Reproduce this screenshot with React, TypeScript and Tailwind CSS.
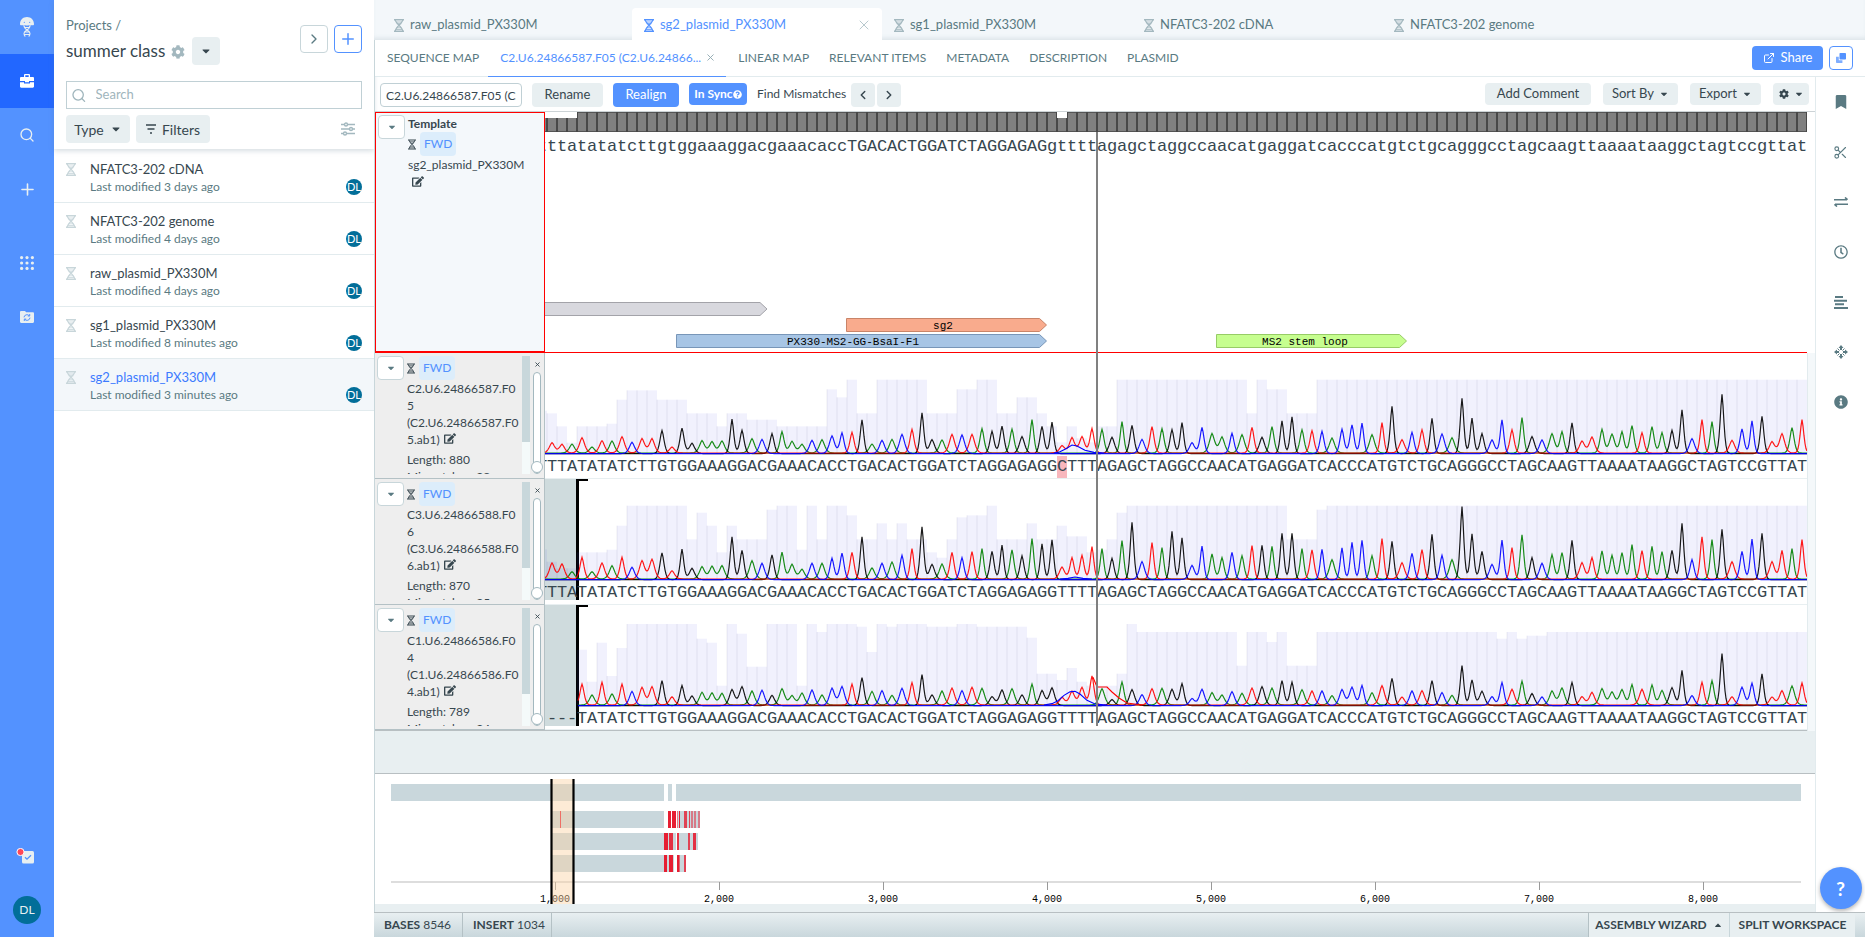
import React from "react";
import { FaBookmark, FaCog, FaInfoCircle, FaRegClock, FaEdit, FaCaretDown, FaCaretUp, FaQuestionCircle } from "react-icons/fa";
import { LuPlus, LuSearch, LuX, LuChevronRight, LuChevronLeft, LuExternalLink, LuScissors } from "react-icons/lu";

const CELL = 10;
const BASES =
  "TTATATATCTTGTGGAAAGGACGAAACACCTGACACTGGATCTAGGAGAGGTTTTAGAGCTAGGCCAACATGAGGATCACCCATGTCTGCAGGGCCTAGCAAGTTAAAATAAGGCTAGTCCGTTAT";
const TEMPLATE =
  "t" + BASES.slice(0, 30).toLowerCase() + BASES.slice(30, 50) + BASES.slice(50).toLowerCase();
const VIEW_WIDTH = (BASES.length + 1) * CELL;

type Read = {
  id: string;
  name: string[];
  length: number;
  mismatches: number;
  sequence: string;
  mismatchAt?: number;
  trimmed: boolean;
  firstBase: number;
  floor: number;
  /* peak positions below the top of the plot, three units to a pixel */
  peaks: number[];
  /* [run length, top of the quality bar] */
  quality: [number, number][];
  extra: { color: string; points: [number, number][] }[];
};

const READS: Read[] = [
  {
    id: "c2",
    name: ["C2.U6.24866587.F0", "5", "(C2.U6.24866587.F0", "5.ab1)"],
    length: 880,
    mismatches: 28,
    sequence: "T" + BASES.slice(0, 51) + "C" + BASES.slice(52),
    mismatchAt: 52,
    trimmed: false,
    firstBase: 0,
    floor: 308,
    peaks: [
      277, 282, 281, 262, 290, 271, 272, 259, 274, 265, 265, 239, 290, 232, 277, 271, 274, 272, 205, 238, 265, 265,
      248, 244, 273, 282, 268, 268, 255, 246, 246, 207, 281, 268, 267, 250, 237, 186, 266, 269, 252, 252, 252, 235,
      241, 226, 236, 257, 208, 226, 214, 286, 262, 259, 235, 237, 259, 214, 223, 265, 229, 235, 236, 215, 275, 230,
      250, 260, 247, 253, 231, 259, 229, 210, 198, 238, 241, 241, 263, 235, 222, 217, 253, 217, 166, 268, 244, 238,
      202, 249, 262, 142, 202, 248, 267, 207, 238, 202, 257, 267, 250, 244, 216, 272, 260, 237, 251, 244, 226, 247,
      229, 247, 238, 177, 263, 208, 214, 130, 270, 234, 210, 196, 274, 250, 232, 208,
    ],
    quality: [
      [1, 181], [1, 189], [1, 228], [1, 277], [3, 228], [1, 220], [1, 148], [3, 120], [3, 148], [3, 189], [1, 228],
      [2, 189], [3, 208], [5, 228], [1, 117], [1, 141], [1, 88], [2, 189], [5, 88], [3, 189], [2, 117], [2, 88],
      [2, 189], [2, 141], [1, 189], [1, 228], [1, 276], [1, 228], [1, 264], [1, 276], [2, 228], [13, 88], [1, 189],
      [1, 88], [2, 117], [3, 189], [49, 88],
    ],
    extra: [{ color: "#0000ff", points: [[1054, 308], [1060, 304], [1066, 295], [1072, 284], [1077, 287], [1085, 300], [1094, 306], [1104, 308]] }],
  },
  {
    id: "c3",
    name: ["C3.U6.24866588.F0", "6", "(C3.U6.24866588.F0", "6.ab1)"],
    length: 870,
    mismatches: 25,
    sequence: "T" + BASES,
    trimmed: true,
    firstBase: 0,
    floor: 686,
    peaks: [
      638, 641, 664, 621, 664, 638, 646, 621, 649, 631, 627, 606, 661, 595, 652, 649, 648, 646, 558, 598, 631, 637,
      612, 606, 642, 657, 637, 639, 622, 607, 606, 558, 653, 637, 635, 613, 595, 528, 640, 641, 606, 620, 604, 595,
      601, 583, 599, 615, 565, 579, 567, 650, 622, 615, 589, 595, 622, 571, 514, 632, 577, 592, 541, 561, 643, 586,
      611, 622, 604, 616, 586, 583, 588, 547, 547, 595, 599, 595, 628, 591, 574, 568, 616, 565, 571, 637, 607, 598,
      550, 613, 628, 467, 549, 601, 640, 568, 592, 553, 620, 637, 613, 607, 568, 637, 622, 602, 615, 607, 583, 601,
      588, 604, 598, 517, 626, 559, 568, 535, 634, 601, 565, 547, 634, 601, 595, 568,
    ],
    quality: [
      [1, 597], [1, 634], [2, 654], [3, 606], [1, 598], [1, 526], [6, 466], [1, 567], [1, 487], [1, 526], [1, 606],
      [1, 526], [3, 567], [1, 478], [2, 466], [1, 598], [1, 466], [1, 567], [2, 466], [1, 495], [2, 567], [1, 519],
      [1, 567], [1, 519], [2, 567], [1, 606], [1, 622], [1, 567], [1, 501], [2, 495], [1, 466], [3, 567], [1, 519],
      [2, 567], [1, 526], [2, 558], [1, 606], [1, 598], [1, 567], [1, 487], [16, 466], [3, 567], [1, 478], [48, 466],
    ],
    extra: [{ color: "#0000ff", points: [[1060, 686], [1068, 684], [1075, 680], [1083, 684], [1092, 686]] }],
  },
  {
    id: "c1",
    name: ["C1.U6.24866586.F0", "4", "(C1.U6.24866586.F0", "4.ab1)"],
    length: 789,
    mismatches: 24,
    sequence: "----" + BASES.slice(3),
    trimmed: true,
    firstBase: 3,
    floor: 1063,
    peaks: [
      1063, 1063, 1063, 1000, 1033, 995, 1030, 1000, 1020, 1010, 1008, 988, 1038, 1003, 1034, 1025, 1027, 1028, 1015,
      1006, 1021, 1017, 1032, 1014, 1035, 1027, 1016, 1033, 1011, 1006, 1000, 979, 1022, 1018, 1034, 1011, 996, 970,
      1031, 1021, 1012, 1018, 1010, 1013, 1036, 1016, 1014, 1031, 1000, 1018, 1010, 1040, 1022, 1010, 976, 1014,
      1045, 994, 1015, 1030, 1014, 1013, 1014, 997, 1042, 1014, 1026, 1033, 1021, 1028, 1012, 1006, 1012, 988, 993,
      1017, 1021, 1019, 1035, 1015, 1008, 1003, 1026, 1005, 981, 1039, 1019, 1020, 988, 1024, 1034, 943, 986, 1020,
      1036, 994, 1016, 991, 1027, 1037, 1021, 1012, 994, 1038, 1025, 1014, 1024, 1017, 1002, 1016, 1003, 1019, 1009,
      958, 1033, 995, 990, 907, 1038, 1008, 996, 968, 1039, 1020, 1006, 997,
    ],
    quality: [
      [4, 1063], [1, 897], [1, 993], [1, 876], [1, 976], [1, 892], [7, 820], [1, 864], [1, 876], [1, 1005], [1, 820],
      [1, 849], [2, 948], [3, 820], [1, 1005], [1, 820], [1, 844], [3, 820], [1, 828], [1, 904], [1, 820], [1, 828],
      [3, 820], [3, 828], [2, 820], [5, 828], [1, 861], [2, 969], [1, 988], [1, 952], [1, 993], [3, 1005], [1, 969],
      [1, 820], [10, 844], [1, 945], [2, 844], [1, 874], [1, 844], [3, 945], [18, 844], [1, 864], [1, 844], [1, 864],
      [2, 855], [26, 844],
    ],
    extra: [
      { color: "#0000ff", points: [[1044, 1063], [1052, 1059], [1058, 1050], [1064, 1034], [1070, 1023], [1075, 1022], [1080, 1030], [1087, 1049], [1095, 1060], [1107, 1063]] },
      { color: "#ff0000", points: [[1093, 980], [1097, 1009], [1107, 1009], [1112, 1024], [1119, 1042], [1127, 1057], [1142, 1063]] },
    ],
  },
];

const CHANNELS: [string, string][] = [
  ["A", "#008000"],
  ["G", "#000000"],
  ["T", "#ff0000"],
  ["C", "#0000ff"],
];
const FLOOR_Y = 100;
const LEFT_X = 537;

function peakWidth(h: number) {
  if (h < 20) return 3.8;
  if (h < 30) return 3;
  return 2.6;
}

function channelPath(read: Read, base: string) {
  const own: { x: number; h: number; w: number }[] = [];
  for (let i = read.firstBase; i < BASES.length; i++) {
    if (BASES[i] !== base) continue;
    const h = (read.floor - read.peaks[i]) / 3;
    own.push({ x: 15 + i * CELL, h, w: peakWidth(h) });
  }
  const start = read.firstBase ? 41 : 0;
  let d = "";
  for (let x = start; x <= VIEW_WIDTH; x++) {
    let y = 0;
    for (const p of own) {
      const dist = Math.abs(x - p.x);
      if (dist < 14) y += p.h * Math.exp(-Math.pow(dist / p.w, 1.6));
    }
    d += (x === start ? "M" : "L") + x + " " + (FLOOR_Y - y).toFixed(1);
  }
  return d;
}

function Chromatogram({ read }: { read: Read }) {
  let at = 0;
  const bars: React.ReactNode[] = [];
  for (const [run, top] of read.quality) {
    const h = (read.floor - top) / 3;
    for (let k = 0; k < run; k++, at++) {
      if (h <= 0) continue;
      bars.push(<rect key={at} x={at * CELL} y={FLOOR_Y - h} width={CELL} height={h} fill="#5050e8" fillOpacity=".08" />);
      bars.push(<rect key={"l" + at} x={at * CELL - 1} y={FLOOR_Y - h} width="2" height={h} fill="#303060" fillOpacity=".045" />);
    }
  }
  return (
    <svg className="block h-[103px] w-[1270px]" viewBox="0 0 1270 103" fill="none" aria-hidden="true">
      {bars}
      {CHANNELS.map(([base, color], n) => (
        <path key={base} d={channelPath(read, base)} stroke={color} strokeWidth="1.2" strokeOpacity="0.9" transform={"translate(0 " + (n % 2) * 0.6 + ")"} />
      ))}
      {read.extra.map((e, n) => (
        <polyline key={n} stroke={e.color} strokeWidth="1.1" points={e.points.map(([x, y]) => x - LEFT_X + "," + (FLOOR_Y - (read.floor - y) / 3)).join(" ")} />
      ))}
    </svg>
  );
}

function Sequence({ text, mark }: { text: string; mark?: number }) {
  return (
    <div className="flex text-[17px] leading-[22px] text-[#37474f] [font-family:'Liberation_Mono',monospace]">
      {text.split("").map((c, i) => (
        <span key={i} className={i === mark ? "flex w-[10px] shrink-0 justify-center bg-[#f8b7bd]" : "flex w-[10px] shrink-0 justify-center"}>
          {c}
        </span>
      ))}
    </div>
  );
}

function Helix({ className }: { className?: string }) {
  return (
    <svg viewBox="0 0 10 13" className={className} fill="none" stroke="currentColor" aria-hidden="true">
      <path d="M0 .8h10M0 12.2h10" strokeWidth="1.4" />
      <path d="M1.3 1c0 3.2 7.4 7.2 7.4 11M8.7 1c0 3.2-7.4 7.2-7.4 11" strokeWidth="1.2" />
      <path d="M2 3h6M2.6 4.7h4.8M2.6 8.8h4.8M2 10.5h6" strokeWidth=".8" />
    </svg>
  );
}

function Jellyfish() {
  return (
    <svg viewBox="0 0 14 20" className="h-5 w-[14px]" aria-hidden="true">
      <path d="M0 7.3C0 2.8 3 0 7 0s7 2.8 7 7.3c0 .9-1.3 1.3-2.2.7-.9.7-2 .7-2.7 0-.7.7-3.5.7-4.2 0-.8.7-1.9.7-2.7 0C1.300 8.6 0 8.2 0 7.3Z" fill="#e8eff1" />
      <circle cx="4.300" cy="5.300" r=".6" fill="#5392ff" />
      <circle cx="9.700" cy="5.300" r=".6" fill="#5392ff" />
      <path d="M4 8.500c0 5 6 4.500 6 8 0 1.500-.6 2.300-1.300 3M10 8.500c0 5-6 4.500-6 8 0 1.500.6 2.300 1.300 3M5 10.500h4M5 15h4M4.500 17.500h5" fill="none" stroke="#e8eff1" strokeWidth="1.100" />
    </svg>
  );
}

const RAIL_BUTTON = "flex h-[54px] w-full items-center justify-center";

function Rail() {
  return (
    <nav className="flex w-[54px] shrink-0 flex-col items-center bg-[#5392ff] text-[#e8eff1]">
      <a href="#home" aria-label="Home" className={RAIL_BUTTON}><Jellyfish /></a>
      <a href="#projects" aria-label="Projects" className="flex h-[54px] w-full items-center justify-center bg-[#2267ff] text-white">
        <svg viewBox="0 0 14 14" className="h-[14px] w-[14px]" fill="currentColor" aria-hidden="true">
          <path d="M4 3V1.200C4 .5 4.500 0 5.200 0h3.600C9.500 0 10 .5 10 1.200V3h2.800c.7 0 1.200.5 1.200 1.200V7H9v1.200H5V7H0V4.200C0 3.500.5 3 1.200 3H4Zm1.300 0h3.400V1.300H5.300V3Z" />
          <path d="M0 8.200h4v1.300h6V8.200h4v4.300c0 .7-.5 1.200-1.200 1.200H1.200C.5 13.700 0 13.200 0 12.500V8.200Z" />
        </svg>
      </a>
      <button aria-label="Search" className={RAIL_BUTTON}><LuSearch className="h-4 w-4" /></button>
      <button aria-label="Create" className={RAIL_BUTTON}><LuPlus className="h-[19px] w-[19px]" /></button>
      <button aria-label="Apps" className="mt-5 flex h-[54px] w-full items-center justify-center">
        <svg viewBox="0 0 14 14" className="h-[14px] w-[14px]" fill="currentColor" aria-hidden="true">
          {[1.6, 7, 12.4].map((y) => [1.6, 7, 12.4].map((x) => <circle key={x + "-" + y} cx={x} cy={y} r="1.600" />))}
        </svg>
      </button>
      <button aria-label="Synced folders" className={RAIL_BUTTON}>
        <svg viewBox="0 0 14 12" className="h-3 w-[14px]" aria-hidden="true">
          <path d="M0 1.200C0 .5.500 0 1.200 0H5l1.200 1.200h6.600c.7 0 1.200.5 1.200 1.200v8.400c0 .7-.5 1.200-1.200 1.200H1.200C.5 12 0 11.500 0 10.800Z" fill="currentColor" />
          <path d="M4 6.300a3 3 0 0 1 5.300-1.500M10 6.700a3 3 0 0 1-5.300 1.600M9.700 3v2H7.800M4.300 10V8.100h1.900" fill="none" stroke="#5392ff" strokeWidth="1" />
        </svg>
      </button>
      <div className="flex-1" />
      <button aria-label="Tasks" className="relative mb-6 flex h-8 w-full items-center justify-center">
        <svg viewBox="0 0 18 16" className="mr-1 h-4 w-[18px]" aria-hidden="true">
          <rect x="6" y="3" width="12" height="12.500" rx="1.500" fill="#e8eff1" />
          <path d="m9 9.200 2 2 4-4" fill="none" stroke="#5392ff" strokeWidth="1.300" />
          <circle cx="4.500" cy="4" r="3.600" fill="#ff4757" stroke="#fff" strokeWidth="1" />
        </svg>
      </button>
      <button aria-label="Account" className="mb-[13px] flex h-7 w-7 items-center justify-center rounded-full bg-[#026e99] text-[12px]">DL</button>
    </nav>
  );
}

const FILES = [
  ["NFATC3-202 cDNA", "Last modified 3 days ago"],
  ["NFATC3-202 genome", "Last modified 4 days ago"],
  ["raw_plasmid_PX330M", "Last modified 4 days ago"],
  ["sg1_plasmid_PX330M", "Last modified 8 minutes ago"],
  ["sg2_plasmid_PX330M", "Last modified 3 minutes ago"],
];

function ProjectPanel() {
  return (
    <aside className="flex w-[320px] shrink-0 flex-col bg-white">
      <header className="flex flex-col px-3 pb-[6px] shadow-[0_2px_5px_rgba(96,125,139,0.25)]">
        <div className="flex items-start pt-4">
          <div className="flex-1">
            <a href="#projects" className="block text-[13px] leading-[18px] text-[#5a7a82]">Projects /</a>
            <div className="flex items-center pt-[3px]">
              <h1 className="text-[17px] leading-7 text-[#37474f]">summer class</h1>
              <FaCog className="ml-[6px] mt-[2px] h-[14px] w-[14px] text-[#a3b8bf]" />
              <button aria-label="Project menu" className="ml-[7px] flex h-7 w-7 items-center justify-center rounded bg-[#e8eff1] text-[#37474f]"><FaCaretDown className="h-3 w-3" /></button>
            </div>
          </div>
          <div className="flex gap-[6px] pt-[9px]">
            <button aria-label="Collapse" className="flex h-7 w-7 items-center justify-center rounded border border-[#c8d6da] text-[#5a7a82]"><LuChevronRight className="h-4 w-4" /></button>
            <button aria-label="New" className="flex h-7 w-7 items-center justify-center rounded border border-[#5392ff] text-[#5392ff]"><LuPlus className="h-[18px] w-[18px]" /></button>
          </div>
        </div>
        <label className="mt-4 flex h-7 items-center border border-[#c0d0d5] pl-1">
          <LuSearch className="h-[17px] w-[17px] text-[#9fb5bc]" />
          <input aria-label="Search" placeholder="Search" className="ml-[9px] w-full text-[13px] outline-none placeholder:text-[#9fb5bc]" />
        </label>
        <div className="flex items-center gap-[6px] pt-[6px] text-[14px] text-[#37474f]">
          <button className="flex h-7 w-16 items-center justify-center gap-[6px] rounded bg-[#e8eff1]">Type<FaCaretDown className="h-3 w-3" /></button>
          <button className="flex h-7 w-[74px] items-center justify-center gap-[6px] rounded bg-[#e8eff1]">
            <svg viewBox="0 0 10 10" className="h-[10px] w-[10px]" stroke="currentColor" strokeWidth="1.300" aria-hidden="true"><path d="M0 1h10M1.500 5h7M4 9h2" /></svg>
            Filters
          </button>
          <button aria-label="Display options" className="ml-auto mr-[7px] text-[#a3b8bf]">
            <svg viewBox="0 0 14 14" className="h-[14px] w-[14px]" fill="#fff" stroke="currentColor" strokeWidth="1.400" aria-hidden="true">
              <path d="M0 2.500h14M0 7h14M0 11.500h14" />
              <circle cx="5" cy="2.500" r="1.500" /><circle cx="10" cy="7" r="1.500" /><circle cx="4" cy="11.500" r="1.500" />
            </svg>
          </button>
        </div>
      </header>
      <ul className="mt-[2px]">
        {FILES.map(([name, when], i) => (
          <li key={name} className={i === 4 ? "flex h-[52px] border-b border-[#e2ebee] bg-[#f3f7fa] px-3 pt-[9px]" : "flex h-[52px] border-b border-[#e2ebee] px-3 pt-[9px]"}>
            <Helix className="mt-[3px] h-[13px] w-[10px] shrink-0 text-[#c8d6da]" />
            <div className="ml-[14px] flex-1">
              <a href={"#" + name} className={i === 4 ? "block text-[13px] leading-[18px] text-[#3d7bff]" : "block text-[13px] leading-[18px] text-[#37474f]"}>{name}</a>
              <p className="text-[12px] leading-[17px] text-[#5a7a82]">{when}</p>
            </div>
            <span className="mt-[19px] flex h-4 w-4 items-center justify-center rounded-full bg-[#026e99] text-[11px] text-white">DL</span>
          </li>
        ))}
      </ul>
    </aside>
  );
}

const TABS = ["raw_plasmid_PX330M", "sg2_plasmid_PX330M", "sg1_plasmid_PX330M", "NFATC3-202 cDNA", "NFATC3-202 genome"];

function TabBar() {
  return (
    <div className="flex h-10 items-end bg-[#f3f7fa] pl-2 shadow-[inset_0_-4px_4px_-2px_rgba(96,125,139,0.15)]">
      {TABS.map((t, i) => (
        <div key={t} className={i === 1 ? "flex h-8 w-[250px] items-center rounded-t bg-white pl-3 pr-[10px] pt-[2px] text-[#5392ff]" : "flex h-8 w-[250px] items-center pl-3 pt-[2px] text-[#5a7a82]"}>
          <Helix className={i === 1 ? "h-[13px] w-[10px]" : "h-[13px] w-[10px] text-[#a3b8bf]"} />
          <a href={"#" + t} className="ml-[6px] text-[13px]">{t}</a>
          {i === 1 && <button aria-label="Close tab" className="ml-auto text-[#b8c9ce]"><LuX className="h-4 w-4" strokeWidth={1.5} /></button>}
        </div>
      ))}
    </div>
  );
}

function ViewTabs() {
  return (
    <div className="flex h-[37px] shrink-0 items-center border-b border-[#e2ebee] bg-white pr-3 text-[12px] text-[#5a7a82]">
      <a href="#map" className="ml-3">SEQUENCE MAP</a>
      <div className="ml-[9px] flex h-[37px] w-[238px] items-center border-b border-[#5392ff] pl-3 pr-[10px] text-[#5392ff]">
        <a href="#alignment" className="whitespace-nowrap">C2.U6.24866587.F05 (C2.U6.24866...</a>
        <button aria-label="Close view" className="ml-auto text-[#8fa8b0]"><LuX className="h-[11px] w-[11px]" /></button>
      </div>
      <div className="ml-3 flex gap-5">
        <a href="#linear">LINEAR MAP</a>
        <a href="#relevant">RELEVANT ITEMS</a>
        <a href="#metadata">METADATA</a>
        <a href="#description">DESCRIPTION</a>
        <a href="#plasmid">PLASMID</a>
      </div>
      <button className="ml-auto flex h-6 w-[71px] items-center justify-center gap-[6px] rounded bg-[#5392ff] text-[13px] text-white"><LuExternalLink className="h-3 w-3" />Share</button>
      <button aria-label="Copy" className="ml-[6px] flex h-6 w-6 items-center justify-center rounded border border-[#5392ff]">
        <svg viewBox="0 0 10 10" className="h-[10px] w-[10px]" fill="#5392ff" aria-hidden="true"><path d="M0 3.800h2.800v3.400h3.600V10H.8C.3 10 0 9.700 0 9.200Z" fillOpacity=".75" /><rect x="3.500" width="6.500" height="6.500" rx=".8" /></svg>
      </button>
    </div>
  );
}

function Toolbar() {
  const flat = "flex h-[22px] items-center justify-center gap-[5px] rounded-sm bg-[#e8eff1]";
  return (
    <div className="flex h-[35px] shrink-0 items-start border-b border-[#ccd3d6] pl-[5px] pr-[6px] pt-[6px] text-[13px] text-[#37474f]">
      <input aria-label="Alignment name" defaultValue="C2.U6.24866587.F05 (C2.U6.24866587.F05.ab1)" className="h-6 w-[142px] rounded-sm border border-[#c0d0d5] px-[5px] text-[12px]" />
      <button className="ml-[10px] h-6 w-[71px] rounded bg-[#e8eff1]">Rename</button>
      <button className="ml-[10px] h-6 w-[66px] rounded bg-[#5392ff] text-white">Realign</button>
      <button className="ml-[10px] flex h-[22px] w-[58px] items-center justify-center rounded-sm bg-[#5392ff] text-[12px] font-bold text-white">In Sync<FaQuestionCircle className="h-[9px] w-[9px]" /></button>
      <span className="ml-[10px] w-[94px] text-[12px] leading-[22px]">Find Mismatches</span>
      <button aria-label="Previous mismatch" className="flex h-6 w-6 items-center justify-center rounded bg-[#e8eff1]"><LuChevronLeft className="h-[14px] w-[14px]" strokeWidth={2.5} /></button>
      <button aria-label="Next mismatch" className="ml-[2px] flex h-6 w-6 items-center justify-center rounded bg-[#e8eff1]"><LuChevronRight className="h-[14px] w-[14px]" strokeWidth={2.5} /></button>
      <div className="ml-auto flex gap-3">
        <button className={flat + " w-[106px]"}>Add Comment</button>
        <button className={flat + " w-[75px]"}>Sort By<FaCaretDown className="h-[10px] w-[10px]" /></button>
        <button className={flat + " w-[71px]"}>Export<FaCaretDown className="h-[10px] w-[10px]" /></button>
        <button aria-label="Settings" className={flat + " w-9"}><FaCog className="h-[10px] w-[10px]" /><FaCaretDown className="h-[10px] w-[10px]" /></button>
      </div>
    </div>
  );
}

function DirectionTag() {
  return (
    <div className="flex items-center">
      <Helix className="h-[11px] w-[8px] text-[#37474f]" />
      <span className="ml-1 rounded bg-[#dcedfb] px-1 text-[12px] leading-6 text-[#5392ff]">FWD</span>
    </div>
  );
}

function MenuButton() {
  return (
    <button aria-label="Row menu" className="flex h-6 w-[27px] shrink-0 items-center justify-center rounded border border-[#c8d6da] bg-white text-[#5a7a82]"><FaCaretDown className="h-[10px] w-[10px]" /></button>
  );
}

function Arrow({ x, y, w, fill, stroke, label, labelX }: { x: number; y: number; w: number; fill: string; stroke: string; label?: string; labelX?: number }) {
  const r = x + w;
  return (
    <g>
      <path d={`M${x} ${y}H${r - 7}L${r} ${y + 6.5}L${r - 7} ${y + 13}H${x}Z`} fill={fill} stroke={stroke} />
      {label && <text x={labelX} y={y + 10} textAnchor="middle" className="fill-black text-[11px] [font-family:'Liberation_Mono',monospace]">{label}</text>}
    </g>
  );
}

function Ruler() {
  return (
    <svg className="block h-5 w-[1270px]" viewBox="0 0 1270 20" aria-hidden="true">
      <rect width="1270" height="20" fill="#808080" />
      <path d="M0 .5h1270M0 19.500h1270" stroke="#555" />
      {Array.from({ length: 127 }, (_, i) => <rect key={i} x={i * CELL + 9} width="2" height="20" fill="#484848" />)}
      <rect width="40" height="6" fill="#fff" />
      <rect x="520" width="10" height="6" fill="#fff" />
    </svg>
  );
}

function TemplateRow() {
  return (
    <div className="flex h-[241px]">
      <div className="flex w-[170px] shrink-0 border border-b-2 border-[#ff0000] bg-[#f4f8fb] pl-[2px] pt-[2px] text-[12px] text-[#37474f]">
        <MenuButton />
        <div className="ml-[3px]">
          <p className="font-bold leading-[17px]">Template</p>
          <DirectionTag />
          <p className="leading-[18px]">sg2_plasmid_PX330M</p>
          <button aria-label="Edit template" className="ml-1 block pt-[2px]"><FaEdit className="h-[11px] w-3" /></button>
        </div>
      </div>
      <div className="min-w-0 flex-1 overflow-hidden border-b border-[#ff0000]">
        <div className="-ml-2">
          <Ruler />
          <div className="pt-1"><Sequence text={TEMPLATE} /></div>
          <svg className="mt-[140px] block h-[52px] w-[1270px]" viewBox="0 0 1270 52" aria-hidden="true">
            <Arrow x={-10} y={4.5} w={240} fill="#d8d8de" stroke="#a3a3a9" />
            <Arrow x={309.5} y={20.5} w={200} fill="#f9ab8d" stroke="#c98468" label="sg2" labelX={406} />
            <Arrow x={139.5} y={36.5} w={370} fill="#a7c5e5" stroke="#7896b8" label="PX330-MS2-GG-BsaI-F1" labelX={316} />
            <Arrow x={679.5} y={36.5} w={190} fill="#c6fe8f" stroke="#97cc66" label="MS2 stem loop" labelX={768} />
          </svg>
        </div>
      </div>
    </div>
  );
}

function ReadRow({ read }: { read: Read }) {
  return (
    <div className="flex h-[126px] last:h-[125px]">
      <div className="flex w-[170px] shrink-0 border-b border-r border-[#b4c1c5] bg-[#eeeeee] pl-[2px] pt-[3px] text-[12px] text-[#37474f]">
        <MenuButton />
        <div className="ml-[3px] h-[118px] flex-1 overflow-hidden">
          <DirectionTag />
          <p className="whitespace-nowrap leading-[17px]">
            {read.name.map((part, i) => (
              <React.Fragment key={i}>{i > 0 && <br />}{part}</React.Fragment>
            ))}
            <button aria-label={"Edit " + read.id} className="ml-1"><FaEdit className="h-[11px] w-3" /></button>
          </p>
          <p className="pt-[3px] leading-[17px]">Length: {read.length}</p>
          <p className="leading-[17px]">Mismatches: {read.mismatches}</p>
        </div>
        <div className="h-[118px] w-2 shrink-0 bg-[#f4fafa]"><div className="h-[86px] bg-[#c8d7db]" /></div>
        <div className="flex w-[14px] shrink-0 flex-col items-center">
          <button aria-label={"Remove " + read.id} className="flex h-4 items-center"><LuX className="h-[7px] w-[7px]" strokeWidth={3} /></button>
          <input type="range" aria-label={"Scale " + read.id} defaultValue={100} className="h-[102px] w-2 appearance-none rounded-full border border-[#a3b8bf] bg-white [writing-mode:vertical-lr] [&::-webkit-slider-thumb]:h-3 [&::-webkit-slider-thumb]:w-3 [&::-webkit-slider-thumb]:appearance-none [&::-webkit-slider-thumb]:rounded-full [&::-webkit-slider-thumb]:border [&::-webkit-slider-thumb]:border-[#a3b8bf] [&::-webkit-slider-thumb]:bg-white" />
        </div>
      </div>
      <div className="relative min-w-0 flex-1 overflow-hidden border-b border-[#e8eff1]">
        {read.trimmed && (
          <>
            <div className="absolute left-0 top-0 h-[121px] w-[31px] bg-[#cfdbdd]" />
            <div className="absolute left-[31px] top-0 h-[121px] w-3 border-l-[3px] border-black"><div className="h-[2px] w-[9px] bg-black" /></div>
          </>
        )}
        <div className="relative -ml-2">
          <Chromatogram read={read} />
          <Sequence text={read.sequence} mark={read.mismatchAt} />
        </div>
      </div>
    </div>
  );
}

function Alignment() {
  return (
    <div className="relative bg-white">
      <div className="mr-2"><TemplateRow /></div>
      <div className="flex">
        <div className="min-w-0 flex-1 border-b border-[#b8bfc2]">
          {READS.map((r) => <ReadRow key={r.id} read={r} />)}
        </div>
        <div className="w-2 shrink-0 border-l border-[#e2ebee] bg-[#f4f8fa]" />
      </div>
      <div className="absolute left-[721px] top-5 h-[594px] w-[2px] bg-[#808080]" />
    </div>
  );
}

const red = (x: number, w: number, o = 1) => [x, w, o] as const;
const MAP_ROWS = [
  { y: 27, spans: [[161, 112], [287, 22]], marks: [red(277, 3), red(281, 4), red(286, 1, 0.6), red(288, 1), red(293, 3, 0.8), red(298, 1, 0.8), red(300, 2, 0.5), red(303, 2, 0.5), red(307, 2, 0.5)] },
  { y: 49, spans: [[161, 113], [275, 10], [288, 19]], marks: [red(273, 4), red(278, 4, 0.9), red(286, 2, 0.9), red(297, 2, 0.8), red(302, 3, 0.9)] },
  { y: 71, spans: [[161, 112], [275, 8], [287, 8]], marks: [red(273, 3), red(278, 4), red(286, 2), red(288, 1, 0.6), red(293, 2, 0.8)] },
];

function Minimap() {
  return (
    <div className="overflow-hidden border-t border-[#b8bfc2] bg-white pl-4">
      <svg className="block h-[130px] w-[1424px]" viewBox="0 0 1424 130" role="img" aria-label="Alignment overview">
        <g transform="translate(0 10)" fill="#c9d7dc">
          <rect width="273" height="17" />
          <rect x="277" width="4" height="17" />
          <rect x="285" width="1125" height="17" />
          {MAP_ROWS.map((r) => (
            <g key={r.y}>
              {r.spans.map(([x, w]) => <rect key={x} x={x} y={r.y} width={w} height="17" />)}
              {r.marks.map(([x, w, o]) => <rect key={x} x={x} y={r.y} width={w} height="17" fill="#e61e32" fillOpacity={o} />)}
            </g>
          ))}
          <rect x="169" y="27" width="1" height="17" fill="#e61e32" />
        </g>
        <rect y="107" width="1410" height="2" fill="#dddddd" />
        {[1, 2, 3, 4, 5, 6, 7, 8].map((k) => (
          <g key={k}>
            <rect x={Math.round(164 * k)} y="108" width="1" height="8" fill="#999" />
            <text x={164 * k} y="128" textAnchor="middle" className="fill-black text-[10px] [font-family:'Liberation_Mono',monospace]">{k + ",000"}</text>
          </g>
        ))}
        <rect x="161" y="5" width="21" height="125" fill="#fbd2a4" fillOpacity=".45" />
        <path d="M160.500 5v125M182.500 5v125" stroke="#000" strokeWidth="2.200" />
      </svg>
    </div>
  );
}

function ToolRail() {
  const icon = "h-[14px] w-[14px]";
  return (
    <div className="flex w-[50px] shrink-0 flex-col items-center border-l border-[#e2ebee] bg-white text-[#5a7a82]">
      {[
        ["Bookmark", <FaBookmark className={icon} />],
        ["Cut sites", <LuScissors className="h-[15px] w-[15px]" strokeWidth={1.8} />],
        ["Primers", <svg viewBox="0 0 14 10" className="h-[10px] w-[14px]" fill="none" stroke="currentColor" strokeWidth="1.600"><path d="M0 2.700h13M11 .5l2.500 2.200M1 7.300h13M3 9.500.5 7.300" /></svg>],
        ["History", <FaRegClock className={icon} />],
        ["Alignments", <svg viewBox="0 0 14 13" className="h-[13px] w-[14px]" fill="currentColor"><path d="M1 0h8v2H1zM0 3.700h13v2H0zM1 7.300h9v2H1zM0 11h14v2H0z" /></svg>],
        ["Design", <svg viewBox="0 0 14 14" className={icon} fill="currentColor"><path d="m7 0 2.500 3H8v2H6V3H4.500ZM7 14l-2.500-3H6V9h2v2h1.500ZM0 7l3-2.500V6h2v2H3v1.500ZM14 7l-3 2.500V8H9V6h2V4.500Z" /><path d="M3.500 3.500l2 2M10.500 3.500l-2 2M3.500 10.500l2-2M10.500 10.500l-2-2" stroke="currentColor" /></svg>],
        ["Information", <FaInfoCircle className={icon} />],
      ].map(([name, glyph]) => (
        <button key={name as string} aria-label={name as string} className="flex h-[50px] w-full items-center justify-center">{glyph}</button>
      ))}
      <button aria-label="Help" className="mb-[3px] mt-auto flex h-[42px] w-[42px] items-center justify-center rounded-full bg-[#5392ff] text-[19px] font-bold leading-none text-white shadow-[0_2px_4px_rgba(0,0,0,0.3)]">?</button>
    </div>
  );
}

function StatusBar() {
  return (
    <footer className="flex h-[25px] shrink-0 border-t border-[#b8bfc2] bg-linear-to-b from-[#e8eff1] to-[#c9d7dc] pr-[10px] text-[12px] leading-6 text-[#37474f]">
      <p className="w-[89px] border-r border-[#b4c1c5] pl-[10px]"><b>BASES</b> 8546</p>
      <p className="w-[89px] border-r border-[#b4c1c5] pl-[10px]"><b>INSERT</b> 1034</p>
      <button className="ml-auto flex w-[141px] items-center justify-center gap-[6px] border-l border-[#b4c1c5] bg-[#e8eff1] font-bold">ASSEMBLY WIZARD<FaCaretUp className="h-[10px] w-[10px]" /></button>
      <button className="w-[126px] border-l border-[#c8d6da] bg-[#e8eff1] font-bold">SPLIT WORKSPACE</button>
    </footer>
  );
}

export default function App() {
  return (
    <div className="flex h-screen min-h-[937px] overflow-hidden bg-white [font-family:Lato,sans-serif]">
      <Rail />
      <ProjectPanel />
      <main className="flex min-w-0 flex-1 flex-col">
        <TabBar />
        <div className="flex min-h-0 flex-1 flex-col border-l border-[#c8d6da]">
          <ViewTabs />
          <div className="flex min-h-0 flex-1">
            <div className="flex min-w-0 flex-1 flex-col">
              <Toolbar />
              <div className="flex min-h-0 flex-1 flex-col bg-[#e8eff1]">
                <Alignment />
                <div className="flex-1" />
                <Minimap />
                <div className="h-2" />
              </div>
            </div>
            <ToolRail />
          </div>
        </div>
        <StatusBar />
      </main>
    </div>
  );
}
